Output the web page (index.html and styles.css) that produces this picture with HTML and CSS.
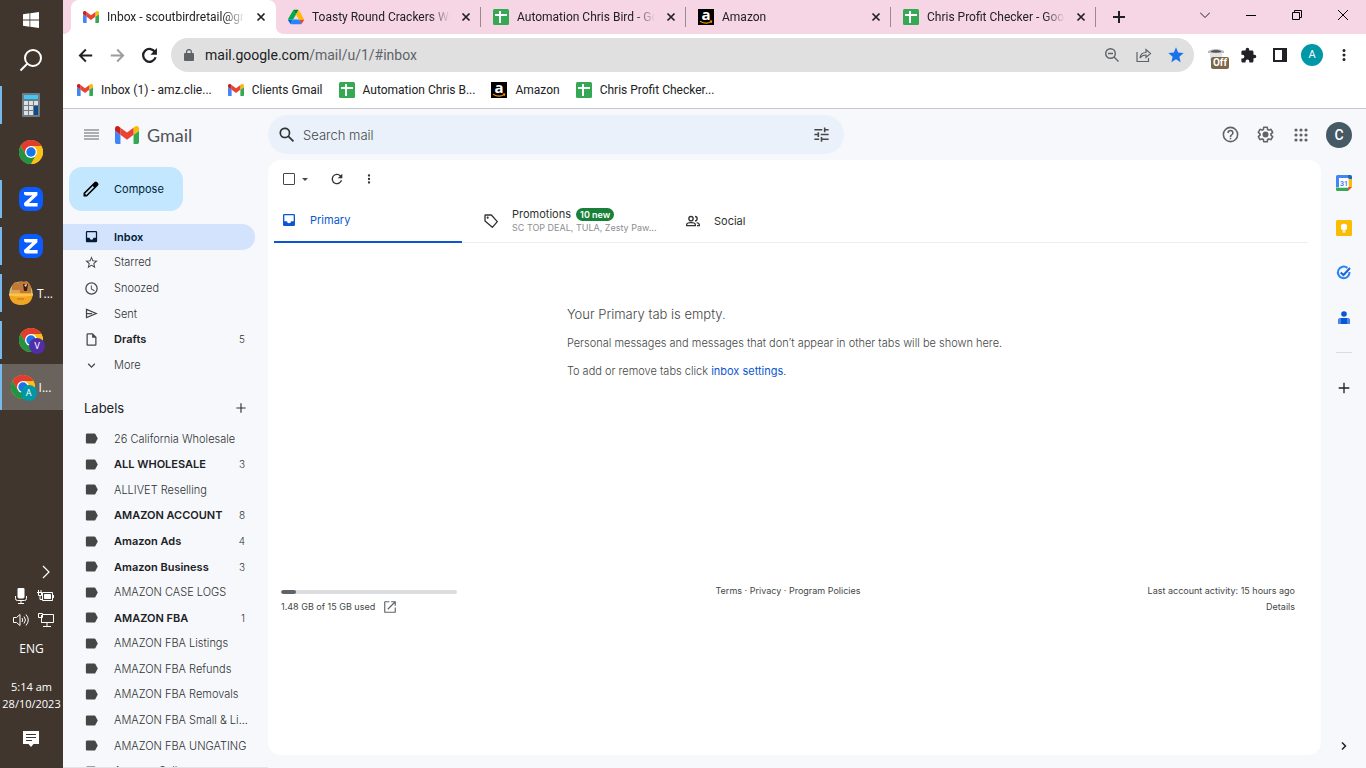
FILE: index.html
```html
<!DOCTYPE html>
<html lang="en">
<head>
<meta charset="utf-8">
<title>Inbox - Gmail</title>
<link rel="stylesheet" href="styles.css">
</head>
<body>
<svg class="sprite" aria-hidden="true">
  <symbol id="gmail" viewBox="52 42 88 66"><path fill="#4285f4" d="M58 108h14V74L52 59v43c0 3.32 2.69 6 6 6"/><path fill="#34a853" d="M120 108h14c3.32 0 6-2.69 6-6V59l-20 15"/><path fill="#fbbc04" d="M120 48v26l20-15v-8c0-7.42-8.47-11.65-14.4-7.2"/><path fill="#ea4335" d="M72 74V48l24 18 24-18v26L96 92"/><path fill="#c5221f" d="M52 51v8l20 15V48l-5.6-4.2c-5.94-4.45-14.4-.22-14.4 7.2"/></symbol>
  <symbol id="drive" viewBox="0 0 87.3 78"><path fill="#0066da" d="m6.6 66.85 3.85 6.65c.8 1.4 1.95 2.5 3.3 3.3l13.75-23.8h-27.5c0 1.55.4 3.1 1.2 4.5z"/><path fill="#00ac47" d="m43.65 25-13.75-23.8c-1.35.8-2.5 1.9-3.3 3.3l-25.4 44a9.06 9.06 0 0 0-1.2 4.5h27.5z"/><path fill="#ea4335" d="m73.55 76.8c1.35-.8 2.5-1.9 3.3-3.3l1.6-2.75 7.65-13.25c.8-1.4 1.2-2.95 1.2-4.5h-27.5l5.85 11.5z"/><path fill="#00832d" d="m43.65 25 13.75-23.8c-1.35-.8-2.9-1.2-4.5-1.2h-18.5c-1.6 0-3.15.45-4.5 1.2z"/><path fill="#2684fc" d="m59.8 53h-32.3l-13.75 23.8c1.35.8 2.9 1.2 4.5 1.2h50.8c1.6 0 3.15-.45 4.5-1.2z"/><path fill="#ffba00" d="m73.4 26.5-12.7-22c-.8-1.4-1.95-2.5-3.3-3.3l-13.75 23.8 16.15 28h27.45c0-1.55-.4-3.1-1.2-4.5z"/></symbol>
  <symbol id="sheet" viewBox="0 0 16 16"><rect width="16" height="16" rx="1.5" fill="#34a853"/><path fill="#fff" d="M6 2h2v3h6v2H8v7H6V7H2V5h4z"/></symbol>
  <symbol id="amazon" viewBox="0 0 16 16"><rect width="16" height="16"/><text x="3.4" y="11" font-family="Open Sans, sans-serif" font-size="15" font-weight="700" fill="#fff">a</text><path d="M2 12.2q6 3.8 11.4.4" fill="none" stroke="#f90" stroke-width="1.2"/><path fill="#f90" d="M11.6 11.6h2.8l-.8 2.6z"/></symbol>
  <symbol id="close" viewBox="0 0 16 16"><path d="m4.5 4.5 7 7m0-7-7 7" stroke="currentColor" stroke-width="1.7"/></symbol>
  <symbol id="chrome" viewBox="0 0 24 24"><circle cx="12" cy="12" r="12" fill="#fbc116"/><path fill="#e33b2e" d="M1.6 6A12 12 0 0 1 22.4 6H12l-5.2 9z"/><path fill="#229342" d="M1.6 6A12 12 0 0 0 12 24l5.2-9-10.4 0z"/><path fill="#fbc116" d="M22.4 6H12l5.2 9L12 24A12 12 0 0 0 22.4 6z"/><circle cx="12" cy="12" r="6" fill="#fff"/><circle cx="12" cy="12" r="4.7" fill="#1a73e8"/></symbol>
  <symbol id="zoomapp" viewBox="0 0 24 24"><rect width="24" height="24" rx="8" fill="#0b5cff"/><path fill="#fff" d="M5 5h13.4v3.2L10 16h8.6v3.4H7.2A2.2 2.2 0 0 1 5 17.2V16l8.4-7.6H7.2A2.2 2.2 0 0 1 5 6.2z"/></symbol>
  <symbol id="inbox" viewBox="0 0 24 24"><path fill="currentColor" d="M19 3H5a2 2 0 0 0-2 2v14c0 1.1.9 2 2 2h14a2 2 0 0 0 2-2V5a2 2 0 0 0-2-2zm0 11h-4a3 3 0 0 1-6 0H5V5h14z"/></symbol>
  <symbol id="star" viewBox="0 0 24 24"><path fill="currentColor" d="m22 9.24-7.19-.62L12 2 9.19 8.63 2 9.24l5.46 4.73L5.82 21 12 17.27 18.18 21l-1.63-7.03zM12 15.4l-3.76 2.27 1-4.28-3.32-2.88 4.38-.38L12 6.1l1.71 4.04 4.38.38-3.32 2.88 1 4.28z"/></symbol>
  <symbol id="clock" viewBox="0 0 24 24"><path fill="currentColor" d="M12 2a10 10 0 1 0 0 20 10 10 0 0 0 0-20zm0 18a8 8 0 1 1 0-16 8 8 0 0 1 0 16zm.5-13H11v6l5.2 3.2.8-1.3-4.5-2.7z"/></symbol>
  <symbol id="send" viewBox="0 0 24 24"><path fill="none" stroke="currentColor" stroke-width="2" d="M4 5.500 19.500 12 4 18.500zM4 12h9"/></symbol>
  <symbol id="file" viewBox="0 0 24 24"><path fill="currentColor" d="M14 2H6a2 2 0 0 0-2 2v16c0 1.1.9 2 2 2h12a2 2 0 0 0 2-2V8zM6 20V4h7v5h5v11z"/></symbol>
  <symbol id="down" viewBox="0 0 24 24"><path fill="currentColor" d="M16.59 8.59 12 13.17 7.41 8.59 6 10l6 6 6-6z"/></symbol>
  <symbol id="label" viewBox="0 0 24 24"><path fill="currentColor" d="M16.500 4H5a2 2 0 0 0-2 2v12c0 1.100.9 2 2 2h11.500c.7 0 1.300-.3 1.700-.9L22 12l-3.800-7.100c-.4-.6-1-.9-1.700-.9z"/></symbol>
  <symbol id="plus" viewBox="0 0 24 24"><path fill="currentColor" d="M20 13h-7v7h-2v-7H4v-2h7V4h2v7h7z"/></symbol>
  <symbol id="search" viewBox="0 0 24 24"><path fill="currentColor" d="M20.49 19 14.76 13.27A6.5 6.5 0 1 0 13.27 14.76L19 20.49zM5 9.5a4.5 4.5 0 1 1 9 0 4.5 4.5 0 0 1-9 0z"/></symbol>
  <symbol id="reload" viewBox="0 0 24 24"><path fill="currentColor" d="M17.65 6.35A8 8 0 1 0 19.73 14h-2.08A6 6 0 1 1 12 6c1.66 0 3.14.69 4.22 1.78L13 11h7V4z"/></symbol>
  <symbol id="dots" viewBox="0 0 24 24"><path fill="currentColor" d="M12 8a2 2 0 1 0 0-4 2 2 0 0 0 0 4zm0 2a2 2 0 1 0 0 4 2 2 0 0 0 0-4zm0 6a2 2 0 1 0 0 4 2 2 0 0 0 0-4z"/></symbol>
  <symbol id="back" viewBox="0 0 24 24"><path fill="none" stroke="currentColor" stroke-width="2.600" d="M21.500 12H4.500M12.500 3.500 4 12l8.500 8.500"/></symbol>
</svg>

<div class="desktop">
  <aside class="taskbar" aria-label="Taskbar">
    <button class="start" aria-label="Start"><svg width="16" height="16" viewBox="0 0 16 16" fill="#fff"><path d="M0 2.2 6.5 1.3v6.300H0zM7.300 1.200 16 0v7.600H7.300zM0 8.400h6.500v6.300L0 13.800zM7.300 8.400H16V16l-8.700-1.200z"/></svg></button>
    <button class="start" aria-label="Search"><svg width="24" height="24" viewBox="0 0 24 24" fill="none" stroke="#fff" stroke-width="2"><circle cx="14" cy="10" r="8"/><path d="m8 16-6.500 6.500"/></svg></button>
    <div class="apps">
      <button class="app running" aria-label="Calculator"><svg width="18" height="24" viewBox="0 0 18 24"><rect width="18" height="24" rx="1" fill="#6f7a83"/><path fill="#42c8f4" d="M2 2h14v4H2z"/><path fill="#dce1e5" d="M2 8h4v4H2zm5 0h4v4H7zm5 0h4v4h-4zM2 13h4v4H2zm5 0h4v4H7zM2 18h4v4H2zm5 0h4v4H7z"/><path fill="#0c4c8c" d="M12 13h4v9h-4z"/></svg></button>
      <button class="app" aria-label="Chrome"><svg width="24" height="24"><use href="#chrome"/></svg></button>
      <button class="app running" aria-label="Zoom"><svg width="24" height="24"><use href="#zoomapp"/></svg></button>
      <button class="app running" aria-label="Zoom meeting"><svg width="24" height="24"><use href="#zoomapp"/></svg></button>
      <button class="app running"><svg width="24" height="24" viewBox="0 0 24 24"><circle cx="12" cy="12" r="11.5" fill="#b9c98a"/><path fill="#c07a35" d="M3 13Q2 4 5 2q1-2 3 0 4-2 7-1 2-2 4 0 4 3 3 12z"/><path fill="#e0a05a" d="M2 9h9v5H2z"/><path fill="#3a1d18" d="M14 3h5l-1 7h-3z"/><path fill="#f4efe6" d="m15 4 3-1-1 3z"/><path fill="#f0a624" d="M0 12.500h24Q23 24 12 24T0 12.500z"/><path fill="#ffc445" d="M0 12.500h24v2q-12 2-24 0z"/><path stroke="#b87312" d="M8 18h7"/></svg><span>T...</span></button>
      <button class="app running" aria-label="Chrome, profile V"><span class="profile"><svg width="24" height="24"><use href="#chrome"/></svg><span class="badge violet">V</span></span></button>
      <button class="app running current"><span class="profile"><svg width="24" height="24"><use href="#chrome"/></svg><span class="badge teal">A</span></span><span>I...</span></button>
    </div>
    <div class="tray">
      <button class="more" aria-label="Show hidden icons"><svg width="8" height="14" viewBox="0 0 8 14" fill="none" stroke="#fff" stroke-width="1.2"><path d="m1 1 6 6-6 6"/></svg></button>
      <div class="status">
        <svg width="16" height="16" viewBox="0 0 16 16" fill="none" stroke="#fff"><rect x="5" y="0" width="6" height="10" rx="1" fill="#fff"/><path d="M2.500 8v2.500q0 2 2 2h7q2 0 2-2V8M8 12.500v3M5 15.500h6"/></svg>
        <svg width="18" height="16" viewBox="0 0 18 16" fill="none" stroke="#fff"><path d="M5.500 4.500h10v8h-10zM16.500 7v3M0 4.500h5M1.500 4.500v3h3v-3M3 8v3.500h2M1.500 2v2M4 2v2"/><path fill="#fff" d="M7.500 6.500h6v4h-6z"/></svg>
        <svg width="16" height="16" viewBox="0 0 16 16" fill="none" stroke="#fff"><path d="M.5 5.500h3L7 2.500v11l-3.500-3h-3zM9 6q1.500 2 0 4M11 4.500q3 3.500 0 7M13 2.500q4.500 5.500 0 11"/></svg>
        <svg width="18" height="16" viewBox="0 0 18 16" fill="none" stroke="#fff"><path d="M6 2.500h10.500v8h-12V6M1.500 1.500h4v4h-4zM4.500 3v8M10 11v3.500M6 14.500h8"/></svg>
      </div>
      <div class="lang">ENG</div>
      <time class="time">5:14 am<br>28/10/2023</time>
      <button class="note" aria-label="Notifications"><svg width="16" height="16" viewBox="0 0 16 16"><path fill="#fff" d="M0 0h16v13h-5.500L8 16l-2.500-3H0z"/><path stroke="#40362e" d="M3 3.500h10M3 6.500h10M3 9.500h6"/></svg></button>
    </div>
  </aside>

  <div class="browser">
    <div class="tabstrip">
      <div class="tab active"><svg class="fav"><use href="#gmail"/></svg><span class="title">Inbox - scoutbirdretail@gmail.com</span><button aria-label="Close tab"><svg width="16" height="16"><use href="#close"/></svg></button></div>
      <div class="tab"><svg class="fav"><use href="#drive"/></svg><span class="title">Toasty Round Crackers With</span><button aria-label="Close tab"><svg width="16" height="16"><use href="#close"/></svg></button></div>
      <div class="tab"><svg class="fav"><use href="#sheet"/></svg><span class="title">Automation Chris Bird - Google</span><button aria-label="Close tab"><svg width="16" height="16"><use href="#close"/></svg></button></div>
      <div class="tab"><svg class="fav"><use href="#amazon"/></svg><span class="title">Amazon</span><button aria-label="Close tab"><svg width="16" height="16"><use href="#close"/></svg></button></div>
      <div class="tab"><svg class="fav"><use href="#sheet"/></svg><span class="title">Chris Profit Checker - Google</span><button aria-label="Close tab"><svg width="16" height="16"><use href="#close"/></svg></button></div>
      <button class="newtab" aria-label="New tab"><svg width="12" height="12" viewBox="0 0 12 12"><path d="M6 0v12M0 6h12" stroke="#202124" stroke-width="2"/></svg></button>
      <div class="window">
        <button aria-label="Search tabs"><svg width="10" height="10" viewBox="0 0 10 10" fill="none" stroke="#222"><path d="m0 2.500 5 5 5-5"/></svg></button>
        <button aria-label="Minimise"><svg width="10" height="10" viewBox="0 0 10 10" stroke="#000"><path d="M0 5.500h10"/></svg></button>
        <button aria-label="Restore"><svg width="10" height="10" viewBox="0 0 10 10" fill="none" stroke="#000"><path d="M.5 2.500h7v7h-7zM2.500 2V.5h7v7H8"/></svg></button>
        <button aria-label="Close"><svg width="10" height="10" viewBox="0 0 10 10" stroke="#000"><path d="m0 0 10 10M10 0 0 10"/></svg></button>
      </div>
    </div>

    <div class="toolbar">
      <button aria-label="Back"><svg width="17" height="17"><use href="#back"/></svg></button>
      <button class="dim" aria-label="Forward"><svg class="flip" width="17" height="17"><use href="#back"/></svg></button>
      <button aria-label="Reload"><svg width="21" height="21" viewBox="0 0 24 24"><path fill="none" stroke="currentColor" stroke-width="2.600" d="M18.500 8.500A7.300 7.300 0 1 0 19 14"/><path fill="currentColor" d="M20.500 3.500v7.500H13z"/></svg></button>
      <div class="omnibox">
        <svg width="10" height="12" viewBox="0 0 10 12"><path fill="#5f6368" d="M1 4h8a1 1 0 0 1 1 1v6a1 1 0 0 1-1 1H1a1 1 0 0 1-1-1V5a1 1 0 0 1 1-1z"/><path fill="none" stroke="#5f6368" stroke-width="1.300" d="M2.600 4.500V3a2.400 2.400 0 0 1 4.800 0v1.500"/></svg>
        <div class="url">mail.google.com<span>/mail/u/1/#inbox</span></div>
        <button aria-label="Zoom"><svg width="16" height="16" viewBox="0 0 16 16" fill="none" stroke="#5f6368" stroke-width="1.400"><circle cx="6.500" cy="6.500" r="4.800"/><path d="m10 10 4.500 4.500M4 6.500h5"/></svg></button>
        <button aria-label="Share"><svg width="16" height="16" viewBox="0 0 16 16" fill="none" stroke="#5f6368" stroke-width="1.200"><path d="M1 5v9.500h11.500V11M4 11q.5-5.500 6-5.500V2.500l4.500 4-4.500 4V8Q6 8 4 11z"/></svg></button>
        <button aria-label="Bookmark this tab"><svg width="16" height="16" viewBox="0 0 24 24"><path fill="#1a73e8" d="m12 18.300 6.900 4.500-1.800-8.200L23.500 9l-8.300-.7L12 .5 8.800 8.300.5 9l6.400 5.600-1.800 8.200z"/></svg></button>
      </div>
      <button class="ext" aria-label="Extension, off"><svg width="16" height="16" viewBox="0 0 16 16"><path fill="#bbb" d="M0 4q8-4 16 0v2H0z"/><path fill="#e4e4e4" d="M2 6h12v8H2z"/><path fill="#555" d="M3 4q5-2 10 0v1q-5 1.500-10 0z"/></svg><span>Off</span></button>
      <button aria-label="Extensions"><svg width="17" height="17" viewBox="0 0 24 24"><path fill="#202124" d="M20.500 11H19V7a2 2 0 0 0-2-2h-4V3.500a2.500 2.500 0 0 0-5 0V5H4a2 2 0 0 0-2 2v3.800h1.500a2.700 2.700 0 0 1 0 5.400H2V20c0 1.100.9 2 2 2h3.800v-1.500a2.700 2.700 0 0 1 5.400 0V22H17a2 2 0 0 0 2-2v-4h1.500a2.500 2.500 0 0 0 0-5z"/></svg></button>
      <button aria-label="Side panel"><svg width="14" height="14" viewBox="0 0 14 14"><path fill="#202124" fill-rule="evenodd" d="M0 0h14v14H0zM2 2v10h7V2z"/></svg></button>
      <button aria-label="Profile"><span class="me">A</span></button>
      <button aria-label="Chrome menu"><svg width="18" height="18"><use href="#dots"/></svg></button>
    </div>

    <nav class="bookmarks" aria-label="Bookmarks">
      <a href="#"><svg class="fav"><use href="#gmail"/></svg>Inbox (1) - amz.clie...</a>
      <a href="#"><svg class="fav"><use href="#gmail"/></svg>Clients Gmail</a>
      <a href="#"><svg class="fav"><use href="#sheet"/></svg>Automation Chris B...</a>
      <a href="#"><svg class="fav"><use href="#amazon"/></svg>Amazon</a>
      <a href="#"><svg class="fav"><use href="#sheet"/></svg>Chris Profit Checker...</a>
    </nav>

    <div class="gmail">
      <header class="header">
        <div class="brand">
          <button aria-label="Main menu"><svg width="15" height="11" viewBox="0 0 15 11"><path d="M0 1h15M0 4h15M0 7h15M0 10h15" stroke="#5f6368" stroke-width="1.200"/></svg></button>
          <a href="#"><svg width="24" height="18"><use href="#gmail"/></svg>Gmail</a>
        </div>
        <form class="search">
          <button type="button" aria-label="Search"><svg width="20" height="20"><use href="#search"/></svg></button>
          <input type="text" placeholder="Search mail" aria-label="Search mail">
          <button type="button" aria-label="Search options"><svg width="19" height="19" viewBox="0 0 24 24"><path fill="#444746" d="M3 17v2h6v-2zM3 5v2h10V5zm10 16v-2h8v-2h-8v-2h-2v6zM7 9v2H3v2h4v2h2V9zm14 4v-2H11v2zm-6-4h2V7h4V5h-4V3h-2z"/></svg></button>
        </form>
        <div class="tools">
          <button aria-label="Support"><svg width="19" height="19" viewBox="0 0 24 24"><path fill="currentColor" d="M11 18h2v-2h-2zm1-16a10 10 0 1 0 0 20 10 10 0 0 0 0-20zm0 18a8 8 0 1 1 0-16 8 8 0 0 1 0 16zm0-14a4 4 0 0 0-4 4h2a2 2 0 1 1 4 0c0 2-3 1.750-3 5h2c0-2.250 3-2.500 3-5a4 4 0 0 0-4-4z"/></svg></button>
          <button aria-label="Settings"><svg width="19" height="19" viewBox="0 0 24 24"><path fill="currentColor" d="M13.850 22.250h-3.700c-.74 0-1.360-.54-1.450-1.270l-.27-1.890c-.27-.14-.53-.29-.79-.46l-1.800.72c-.7.26-1.470-.03-1.810-.65L2.200 15.530c-.35-.66-.2-1.440.36-1.880l1.530-1.190a6 6 0 0 1 0-.92l-1.520-1.190c-.59-.45-.74-1.260-.37-1.880l1.850-3.190c.34-.62 1.110-.9 1.790-.63l1.810.73c.26-.17.52-.32.78-.46l.27-1.910c.09-.7.71-1.250 1.440-1.250h3.700c.74 0 1.360.54 1.450 1.270l.27 1.890c.27.140.53.290.79.460l1.800-.72c.71-.26 1.480.03 1.820.65l1.840 3.180c.36.66.2 1.440-.36 1.880l-1.520 1.190a6 6 0 0 1 0 .92l1.520 1.190c.56.45.72 1.230.37 1.860l-1.860 3.220c-.34.62-1.110.9-1.800.63l-1.800-.72c-.26.17-.52.32-.78.46l-.27 1.910c-.1.680-.72 1.220-1.460 1.220zm-3.230-2h2.760l.37-2.550.53-.22c.44-.18.880-.44 1.340-.78l.45-.34 2.380.96 1.380-2.400-2.030-1.580.07-.56a5 5 0 0 0 0-1.550l-.07-.56 2.030-1.580-1.390-2.400-2.390.96-.45-.35c-.42-.32-.87-.580-1.330-.77l-.52-.22-.37-2.550h-2.760l-.37 2.550-.53.210c-.44.190-.88.440-1.340.790l-.45.330-2.380-.95-1.390 2.390 2.030 1.580-.07.560a7 7 0 0 0 0 1.560l.07.560-2.030 1.580 1.380 2.400 2.390-.96.45.350c.43.330.86.580 1.330.77l.53.220z"/><circle cx="12" cy="12" r="3.800" fill="currentColor"/></svg></button>
          <button aria-label="Google apps"><svg width="14" height="14" viewBox="0 0 14 14"><path fill="none" stroke="currentColor" stroke-width="3.200" stroke-linecap="round" d="M2 2h0M7 2h0M12 2h0M2 7h0M7 7h0M12 7h0M2 12h0M7 12h0M12 12h0"/></svg></button>
          <button class="account" aria-label="Google Account">C</button>
        </div>
      </header>

      <div class="body">
        <nav class="side" aria-label="Mail folders">
          <button class="compose"><svg width="20" height="20" viewBox="0 0 24 24"><path fill="#000" fill-rule="evenodd" d="M20.400 4.900 19.100 3.600a2 2 0 0 0-2.800 0L3 16.900V21h4.100L20.400 7.700a2 2 0 0 0 0-2.800zM6.300 19.200l-1.500-1.500 9.300-9.300 1.500 1.500z"/></svg>Compose</button>
          <div class="folders">
            <a class="row selected" href="#"><svg><use href="#inbox"/></svg><b>Inbox</b></a>
            <a class="row" href="#"><svg><use href="#star"/></svg><span>Starred</span></a>
            <a class="row" href="#"><svg><use href="#clock"/></svg><span>Snoozed</span></a>
            <a class="row" href="#"><svg><use href="#send"/></svg><span>Sent</span></a>
            <a class="row" href="#"><svg><use href="#file"/></svg><b>Drafts</b><small>5</small></a>
            <a class="row" href="#"><svg><use href="#down"/></svg><span>More</span></a>
          </div>
          <div class="labelhead"><h2>Labels</h2><button aria-label="Create new label"><svg width="14" height="14"><use href="#plus"/></svg></button></div>
          <div class="labels">
            <a class="row" href="#"><svg><use href="#label"/></svg><span>26 California Wholesale</span></a>
            <a class="row" href="#"><svg><use href="#label"/></svg><b>ALL WHOLESALE</b><small>3</small></a>
            <a class="row" href="#"><svg><use href="#label"/></svg><span>ALLIVET Reselling</span></a>
            <a class="row" href="#"><svg><use href="#label"/></svg><b>AMAZON ACCOUNT</b><small>8</small></a>
            <a class="row" href="#"><svg><use href="#label"/></svg><b>Amazon Ads</b><small>4</small></a>
            <a class="row" href="#"><svg><use href="#label"/></svg><b>Amazon Business</b><small>3</small></a>
            <a class="row" href="#"><svg><use href="#label"/></svg><span>AMAZON CASE LOGS</span></a>
            <a class="row" href="#"><svg><use href="#label"/></svg><b>AMAZON FBA</b><small>1</small></a>
            <a class="row" href="#"><svg><use href="#label"/></svg><span>AMAZON FBA Listings</span></a>
            <a class="row" href="#"><svg><use href="#label"/></svg><span>AMAZON FBA Refunds</span></a>
            <a class="row" href="#"><svg><use href="#label"/></svg><span>AMAZON FBA Removals</span></a>
            <a class="row" href="#"><svg><use href="#label"/></svg><span>AMAZON FBA Small &amp; Li...</span></a>
            <a class="row" href="#"><svg><use href="#label"/></svg><span>AMAZON FBA UNGATING</span></a>
            <a class="row" href="#"><svg><use href="#label"/></svg><span>Amazon Seller</span></a>
          </div>
        </nav>

        <main class="card">
          <div class="actions">
            <input type="checkbox" aria-label="Select">
            <button aria-label="Select options"><svg width="6" height="3" viewBox="0 0 6 3"><path fill="#444746" d="M0 0h6L3 3z"/></svg></button>
            <button class="act" aria-label="Refresh"><svg width="16" height="16"><use href="#reload"/></svg></button>
            <button class="act" aria-label="More options"><svg width="14" height="14"><use href="#dots"/></svg></button>
          </div>
          <div class="cats" role="tablist">
            <button class="cat on" role="tab" aria-selected="true"><svg width="16" height="16"><use href="#inbox"/></svg><span>Primary</span></button>
            <button class="cat" role="tab" aria-selected="false"><svg width="16" height="16" viewBox="0 0 24 24"><path fill="none" stroke="currentColor" stroke-width="2" stroke-linejoin="round" d="M4 3h8.500L21.500 13 14 21.500 3 12V4a1 1 0 0 1 1-1z"/><circle cx="7" cy="7" r="1.600" fill="currentColor"/></svg><span>Promotions <em>10 new</em><small>SC TOP DEAL, TULA, Zesty Paw...</small></span></button>
            <button class="cat" role="tab" aria-selected="false"><svg width="16" height="16" viewBox="0 0 24 24" fill="none" stroke="currentColor" stroke-width="2"><circle cx="9" cy="8.500" r="3.200"/><path d="M2.500 19v-1.500q0-3 6.500-3t6.500 3V19zM15 5.300a3.200 3.200 0 0 1 0 6.400M17.500 14.500q4 1 4 3V19H18"/></svg><span>Social</span></button>
          </div>
          <section class="empty">
            <div>
              <h1>Your Primary tab is empty.</h1>
              <p>Personal messages and messages that don’t appear in other tabs will be shown here.</p>
              <p>To add or remove tabs click <a href="#">inbox settings</a>.</p>
            </div>
          </section>
          <footer class="foot">
            <div><div class="quota"><div class="used"></div></div><a href="#">1.48 GB of 15 GB used <svg width="14" height="14" viewBox="0 0 24 24"><path fill="#5f6368" d="M20 20H4V4h7V2H3.500A1.500 1.500 0 0 0 2 3.500v17A1.500 1.500 0 0 0 3.500 22h17a1.500 1.500 0 0 0 1.500-1.500V13h-2zM14 2v2h4.600L7.500 15.100l1.400 1.400L20 5.400V10h2V2z"/></svg></a></div>
            <div class="terms"><a href="#">Terms</a> · <a href="#">Privacy</a> · <a href="#">Program Policies</a></div>
            <div class="activity">Last account activity: 15 hours ago<br><a href="#">Details</a></div>
          </footer>
        </main>

        <aside class="addons" aria-label="Side panel">
          <button aria-label="Calendar"><svg width="16" height="16" viewBox="0 0 16 16"><path fill="#4285f4" d="M0 1.500A1.500 1.500 0 0 1 1.500 0H12v3H3v9H0z"/><path fill="#1967d2" d="M12 0h2.500A1.500 1.500 0 0 1 16 1.500V4h-4z"/><path fill="#fbbc04" d="M12.500 4H16v8h-3.500z"/><path fill="#34a853" d="M0 12.500h12V16H1.500A1.500 1.500 0 0 1 0 14.500z"/><path fill="#ea4335" d="M12 12h4l-4 4z"/><path fill="#fff" d="M3 3h9.500v9.500H3z"/><text x="4" y="10.500" font-family="Roboto, sans-serif" font-size="7" font-weight="700" fill="#4285f4">31</text></svg></button>
          <button aria-label="Keep"><svg width="16" height="16" viewBox="0 0 16 16"><rect width="16" height="16" rx="1.500" fill="#fbbc04"/><circle cx="8" cy="7" r="3.200" fill="#fff"/><path fill="#fff" d="M6.500 9h3v1.500h-3zM6.500 11.200h3v1.300h-3z"/></svg></button>
          <button aria-label="Tasks"><svg width="16" height="16" viewBox="0 0 16 16" fill="none" stroke="#2684fc" stroke-width="2"><path d="M11.500 3A5.800 5.800 0 1 0 13.500 7"/><path stroke="#1967d2" d="M4.700 7.500 7.500 10 14 3"/></svg></button>
          <button aria-label="Contacts"><svg width="16" height="16" viewBox="0 0 16 16"><circle cx="8" cy="4" r="2.800" fill="#0b57d0"/><path fill="#0b57d0" d="M5 8h6q3 0 3 3v3H2v-3q0-3 3-3z"/><path fill="#4b86ea" d="M5 8v6H2v-3q0-3 3-3zM11 8v6h3v-3q0-3-3-3z"/></svg></button>
          <hr>
          <button aria-label="Get add-ons"><svg width="16" height="16"><use href="#plus"/></svg></button>
          <button class="hide" aria-label="Hide side panel"><svg width="6" height="8" viewBox="0 0 6 8" fill="none" stroke="#202124" stroke-width="1.500"><path d="m1 .5 3.500 3.500L1 7.500"/></svg></button>
        </aside>
      </div>
    </div>
  </div>
</div>
</body>
</html>
```
FILE: styles.css
```css
* { box-sizing: border-box; }
body { margin: 0; font-family: Roboto, "Liberation Sans", sans-serif; font-size: 11px; color: #444746; }
button { border: 0; padding: 0; background: none; font: inherit; color: inherit; display: flex; align-items: center; justify-content: center; }
a { color: inherit; text-decoration: none; }
svg { flex: none; display: block; }
.sprite { position: absolute; width: 0; height: 0; }

.desktop { display: flex; height: 100vh; overflow: hidden; }

/* Taskbar */
.taskbar { flex: none; width: 63px; display: flex; flex-direction: column; background: #40362e; color: #fff; font: 12px "Open Sans", sans-serif; }
.taskbar button { padding-right: 1px; }
.start { height: 40px; }
.apps { display: grid; gap: 1px; padding-top: 2px; }
.app { height: 46px; gap: 4px; position: relative; }
.app.running::before { content: ""; position: absolute; left: 0; top: 4px; bottom: 4px; width: 2px; background: #76b9ed; }
.app.current { background: #6a625c; }
.app.current::before { top: 0; bottom: 0; }
.profile { position: relative; }
.badge { position: absolute; right: -2px; bottom: -2px; width: 16px; height: 16px; border-radius: 50%; font: 9px/16px Roboto, sans-serif; text-align: center; }
.violet { background: #512da8; }
.teal { background: #0097a7; }
.tray { margin-top: auto; display: grid; text-align: center; border-bottom: 1px solid #40362e; }
.more { height: 24px; padding-left: 29px; }
.status { display: grid; grid-template-columns: 16px 18px; gap: 8px; justify-content: center; padding: 4px 0 0 5px; }
.lang { padding-top: 13px; line-height: 16px; }
.time { padding-top: 21px; line-height: 17px; font-size: 11px; }
.tray .note { height: 55px; padding-bottom: 1px; }

/* Browser frame */
.browser { flex: 1; min-width: 0; display: flex; flex-direction: column; font-family: Roboto, sans-serif; font-size: 12px; color: #202124; background: #fff; }
.fav { width: 16px; height: 16px; }
.tabstrip { flex: none; height: 34px; display: flex; background: #f6d5e4; padding-left: 8px; }
.tab { position: relative; flex: 0 1 205px; min-width: 0; display: flex; align-items: center; gap: 8px; padding: 0 7px 0 12px; }
.tab .title { flex: 1; overflow: hidden; white-space: nowrap; -webkit-mask-image: linear-gradient(90deg, #000 85%, transparent); mask-image: linear-gradient(90deg, #000 85%, transparent); }
.tab:not(.active)::after { content: ""; position: absolute; right: 0; top: 7px; height: 20px; width: 1px; background: #9c8790; }
.tab.active { background: #fff; border-radius: 8px 8px 0 0; }
.tab.active::before, .tab.active::after { content: ""; position: absolute; bottom: 0; width: 8px; height: 8px; }
.tab.active::before { left: -8px; background: radial-gradient(circle at 0 0, transparent 8px, #fff 8px); }
.tab.active::after { right: -8px; background: radial-gradient(circle at 100% 0, transparent 8px, #fff 8px); }
.newtab { width: 46px; }
.window { margin-left: auto; display: flex; height: 29px; }
.window button { width: 46px; }

.toolbar { flex: none; height: 42px; display: flex; align-items: center; padding: 0 6px; }
.toolbar button { flex: none; width: 32px; height: 32px; }
.dim { color: #9a9c9e; }
.flip { transform: scaleX(-1); }
.omnibox { flex: 1; min-width: 0; display: flex; align-items: center; height: 34px; margin: 0 6px; padding: 0 2px 0 13px; border-radius: 17px; background: #e0e0e0; }
.url { flex: 1; padding-left: 11px; font-size: 14px; }
.url span { color: #5f6368; }
.ext { position: relative; }
.ext span { position: absolute; left: 11px; top: 18px; width: 18px; height: 12px; border-radius: 2px; background: #7c6548; color: #fff; font: 700 10px/12px Roboto, sans-serif; text-align: center; }
.me { width: 22px; height: 22px; border-radius: 50%; background: #0097a7; color: #fff; font: 11px/22px Roboto, sans-serif; }
.bookmarks { flex: none; height: 33px; display: flex; gap: 16px; padding: 0 14px 4px; border-bottom: 1px solid #c8c8c8; }
.bookmarks a { display: flex; align-items: center; gap: 8px; white-space: nowrap; }

/* Gmail */
.gmail { flex: 1; min-height: 0; display: flex; flex-direction: column; background: #f6f8fc; font-family: Inter, Roboto, sans-serif; font-size: 11px; font-weight: 300; color: #303331; }
.header { flex: none; height: 51px; display: flex; align-items: center; }
.brand { flex: none; width: 205px; display: flex; align-items: center; padding-left: 21px; gap: 16px; }
.brand a { display: flex; align-items: center; gap: 8px; font: 18px Lato, sans-serif; color: #505458; }
.search { flex: 0 1 576px; height: 39px; display: flex; align-items: center; border-radius: 20px; background: #eaf1fb; padding: 0 13px 0 9px; gap: 6px; }
.search input { flex: 1; min-width: 0; border: 0; padding: 0; outline: 0; background: none; font: 300 13px Inter, sans-serif; color: #444746; }
.search input::placeholder { color: #444746; opacity: 1; }
.tools { margin-left: auto; display: flex; align-items: center; padding-right: 14px; color: #5f6368; }
.tools button { width: 35px; height: 35px; }
.tools .account { width: 26px; height: 26px; margin-left: 8px; border-radius: 50%; background: #455a64; color: #fff; font: 500 14px Roboto, sans-serif; }
.body { flex: 1; min-height: 0; display: flex; }

.side { flex: none; width: 205px; overflow: hidden; padding-top: 7px; border-bottom: 1px solid #e1e4e8; }
.compose { height: 44px; width: 114px; margin-left: 6px; padding-left: 12px; gap: 13px; justify-content: flex-start; border-radius: 13px; background: #c2e7ff; color: #001d35; font-weight: 400; }
.folders, .labels { display: grid; grid-template-columns: minmax(0, 1fr); grid-auto-rows: 1fr; }
.folders { height: 154px; margin-top: 13px; }
.labels { height: 358px; }
.row { display: flex; align-items: center; gap: 15px; padding: 0 10px 0 21px; margin-right: 13px; white-space: nowrap; }
.row svg { width: 15px; height: 15px; color: #444746; }
.row small { margin-left: auto; font-size: 10px; }
.row b { font-weight: 600; color: #202124; }
.selected { background: #d3e3fd; border-radius: 0 13px 13px 0; }
.selected b, .selected svg { color: #001d35; }
.labelhead { height: 48px; display: flex; align-items: center; justify-content: space-between; padding: 12px 20px 0 21px; }
.labelhead h2 { margin: 0; font-size: 13px; font-weight: 400; color: #202124; }

.card { flex: 1; min-width: 0; display: flex; flex-direction: column; background: #fff; border-radius: 13px; margin-bottom: 13px; }
.actions { display: flex; align-items: center; height: 38px; padding-left: 15px; }
.actions input { appearance: none; width: 12px; height: 12px; margin: 0; border: 1px solid #444746; border-radius: 1px; }
.actions button { width: 20px; height: 20px; }
.actions .act { width: 32px; }
.actions .act:nth-child(3) { margin-left: 6px; }
.cats { display: flex; height: 45px; margin: 0 13px 0 6px; border-bottom: 1px solid #eceff1; }
.cat { flex: 0 0 202px; height: 45px; justify-content: flex-start; gap: 13px; padding-left: 7px; text-align: left; font-weight: 400; }
.cat em { display: inline-block; margin-left: 2px; padding: 0 4px; border-radius: 7px; background: #188038; color: #fff; font-style: normal; font-weight: 600; font-size: 9px; line-height: 13px; }
.cat small { display: block; font-size: 9px; line-height: 14px; color: #8b8e91; white-space: nowrap; }
.cat.on { flex-basis: 188px; margin-right: 14px; color: #0b57d0; border-bottom: 2px solid #0b57d0; }
.empty { display: flex; justify-content: center; padding: 63px 20px 0 0; color: #444746; }
.empty h1 { margin: 0 0 13px; font-size: 13px; line-height: 16px; font-weight: 300; }
.empty p { margin: 0 0 12px; line-height: 16px; }
.empty a { color: #0b57d0; font-weight: 400; }
.foot { display: grid; grid-template-columns: 1fr 1fr 1fr; padding: 192px 26px 0 13px; font-size: 9px; line-height: 16px; color: #444746; font-weight: 400; }
.quota { width: 176px; height: 4px; margin: 7px 0 5px; border-radius: 2px; background: #dadce0; overflow: hidden; }
.used { width: 15px; height: 4px; border-radius: 2px; background: #5f6368; }
.foot div > a { display: inline-flex; align-items: center; gap: 8px; }
.terms { text-align: center; }
.activity { text-align: right; }

.addons { flex: none; width: 45px; display: flex; flex-direction: column; align-items: center; color: #202124; }
.addons button { width: 45px; height: 45px; }
.addons hr { width: 16px; height: 1px; margin: 12px 0; border: 0; background: #dadce0; }
.addons .hide { margin-top: auto; }
```
